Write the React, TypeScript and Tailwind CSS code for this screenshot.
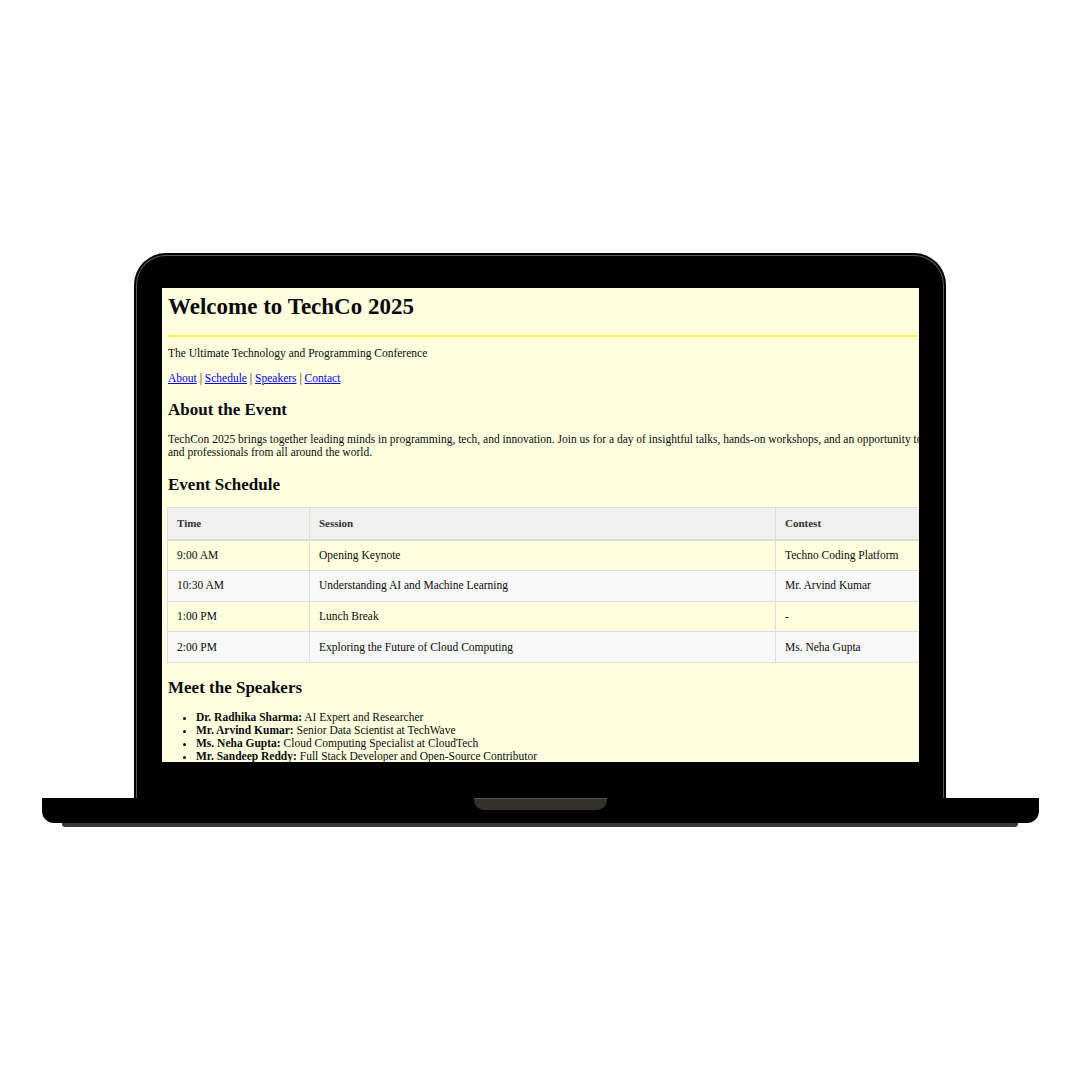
const schedule = [
  { time: "9:00 AM", session: "Opening Keynote", contest: "Techno Coding Platform" },
  { time: "10:30 AM", session: "Understanding AI and Machine Learning", contest: "Mr. Arvind Kumar" },
  { time: "1:00 PM", session: "Lunch Break", contest: "-" },
  { time: "2:00 PM", session: "Exploring the Future of Cloud Computing", contest: "Ms. Neha Gupta" },
]

const speakers = [
  { name: "Dr. Radhika Sharma:", role: "AI Expert and Researcher" },
  { name: "Mr. Arvind Kumar:", role: "Senior Data Scientist at TechWave" },
  { name: "Ms. Neha Gupta:", role: "Cloud Computing Specialist at CloudTech" },
  { name: "Mr. Sandeep Reddy:", role: "Full Stack Developer and Open-Source Contributor" },
]

function Screen() {
  return (
    <div className="w-[757px] h-[474px] overflow-hidden bg-[#ffffe0] text-[#0a0a0a] font-['Liberation_Serif',serif]">
      <header className="ml-[5px] w-[900px] pt-[6px] pb-[15px] border-b-2 border-[#ffff40]">
        <h1 className="pl-px text-[23px] leading-[26px] font-bold">Welcome to TechCo 2025</h1>
      </header>

      <div className="pl-[6px] w-[900px] text-[11.5px] leading-[13px]">
        <p className="mt-[9.5px]">The Ultimate Technology and Programming Conference</p>
        <nav className="mt-[12px]">
          <a href="#about" className="text-[#0000ee] underline">About</a> |{" "}
          <a href="#schedule" className="text-[#0000ee] underline">Schedule</a> |{" "}
          <a href="#speakers" className="text-[#0000ee] underline">Speakers</a> |{" "}
          <a href="#contact" className="text-[#0000ee] underline">Contact</a>
        </nav>

        <h2 id="about" className="mt-[15.5px] text-[17px] leading-[20px] font-bold">About the Event</h2>
        <p className="mt-[12.5px] whitespace-nowrap">
          TechCon 2025 brings together leading minds in programming, tech, and innovation. Join us for a day of
          insightful talks, hands-on workshops, and an opportunity to connect with developers, researchers,
          <br />
          and professionals from all around the world.
        </p>

        <h2 id="schedule" className="mt-[16.5px] text-[17px] leading-[20px] font-bold">Event Schedule</h2>
        <table className="mt-[12px] -ml-px border-collapse table-fixed w-[800px] text-left">
          <colgroup>
            <col className="w-[142px]" />
            <col className="w-[466px]" />
            <col className="w-[192px]" />
          </colgroup>
          <thead>
            <tr className="h-[32px] bg-[#f0f0f0] text-[#333] text-[11px]">
              <th className="border border-[#ddd] border-b-2 pl-[9px] font-bold">Time</th>
              <th className="border border-[#ddd] border-b-2 pl-[9px] font-bold">Session</th>
              <th className="border border-[#ddd] border-b-2 pl-[9px] font-bold">Contest</th>
            </tr>
          </thead>
          <tbody>
            {schedule.map((row, i) => (
              <tr key={row.time} className={i % 2 === 1 ? "h-[30.75px] bg-[#f8f8f8]" : "h-[30.75px]"}>
                <td className="border border-[#ddd] pl-[9px]">{row.time}</td>
                <td className="border border-[#ddd] pl-[9px]">{row.session}</td>
                <td className="border border-[#ddd] pl-[9px]">{row.contest}</td>
              </tr>
            ))}
          </tbody>
        </table>

        <h2 id="speakers" className="mt-[14.5px] text-[17px] leading-[20px] font-bold">Meet the Speakers</h2>
        <ul className="mt-[13.5px] list-disc pl-[28px]">
          {speakers.map((s) => (
            <li key={s.name}>
              <b>{s.name}</b> {s.role}
            </li>
          ))}
        </ul>
      </div>
    </div>
  )
}

export default function App() {
  return (
    <div className="w-[1080px] h-[1080px] bg-white flex flex-col items-center pt-[253px]">
      {/* lid */}
      <div className="w-[812px] h-[545px] bg-black rounded-t-[32px] p-[2px] pb-0">
        <div className="h-full rounded-t-[30px] border border-b-0 border-[#5a5a5a] bg-black pl-[25px] pt-[32px]">
          <Screen />
        </div>
      </div>

      {/* base */}
      <div className="w-[997px] h-[25px] bg-black rounded-b-[12px] flex justify-center">
        <div className="w-[133px] h-[12px] bg-[#34322d] rounded-b-[10px] border-t border-[#55534d]" />
      </div>
      <div className="w-[956px] h-[4px] bg-[#3a3935] rounded-b-[3px]" />
    </div>
  )
}
